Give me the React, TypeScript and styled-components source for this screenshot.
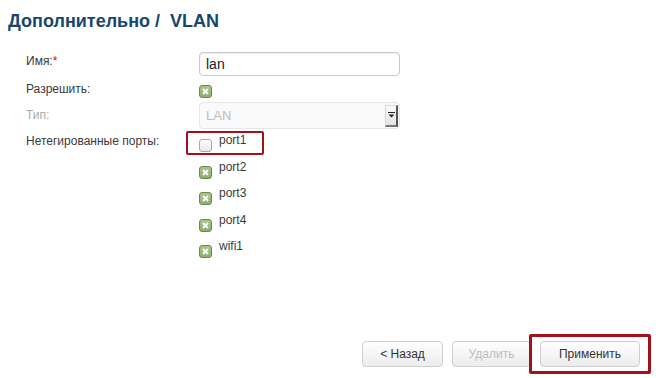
import React from 'react';
import styled, { createGlobalStyle } from 'styled-components';

const Global = createGlobalStyle`
  body {
    margin: 0;
    background: #fff;
    font-family: "Liberation Sans", Arial, sans-serif;
  }
`;

const Page = styled.div`
  min-height: 100vh;
  box-sizing: border-box;
  display: flex;
  flex-direction: column;
  padding-bottom: 11px;
`;

const Title = styled.h1`
  margin: 0;
  padding: 10px 8px 0;
  font-size: 18px;
  line-height: 22px;
  font-weight: bold;
  color: #17466f;
  white-space: pre;
`;

const Form = styled.div`
  margin-top: 20px;
  padding-left: 26px;
  display: flex;
  flex-direction: column;
`;

const Row = styled.div<{ $h: number; $gap: number }>`
  display: grid;
  grid-template-columns: 173px 201px;
  align-items: start;
  min-height: ${p => p.$h}px;
  margin-bottom: ${p => p.$gap}px;
`;

const Label = styled.div<{ $top: number; $muted?: boolean }>`
  padding-top: ${p => p.$top}px;
  font-size: 12px;
  line-height: 14px;
  color: ${p => (p.$muted ? '#ababab' : '#3a3a3a')};
`;

const Req = styled.span`
  color: #c8102e;
`;

const TextInput = styled.div`
  box-sizing: border-box;
  height: 24px;
  border: 1px solid #c9c9c9;
  border-radius: 4px;
  box-shadow: inset 0 1px 2px rgba(0, 0, 0, 0.08);
  padding: 0 6px;
  display: flex;
  align-items: center;
  font-size: 14px;
  color: #222;
`;

const Select = styled.div`
  box-sizing: border-box;
  height: 27px;
  border: 1px solid #e6e6e6;
  border-radius: 4px;
  background: #fafafa;
  padding: 0 1px 0 6px;
  display: flex;
  align-items: center;
  justify-content: space-between;
  font-size: 13px;
  color: #bdbdbd;
`;

const Drop = styled.div`
  box-sizing: border-box;
  width: 13px;
  height: 22px;
  background: linear-gradient(#fafafa, #e4e4e4);
  border: 1px solid #d8d8d8;
  border-right: 2px solid #555;
  border-bottom: 2px solid #777;
  display: flex;
  align-items: center;
  justify-content: center;
`;

const CheckCell = styled.div`
  padding-top: 3px;
`;

const Box = styled.span<{ $on: boolean }>`
  flex: none;
  box-sizing: border-box;
  width: 13px;
  height: 13px;
  border-radius: 3px;
  display: flex;
  align-items: center;
  justify-content: center;
  border: 1px solid ${p => (p.$on ? '#6a8a4c' : '#a9a9a9')};
  background: ${p =>
    p.$on ? 'linear-gradient(#a9c58b, #8eae70)' : 'linear-gradient(#fdfdfd, #e9e9e9)'};
`;

const Ports = styled.div`
  display: flex;
  flex-direction: column;
`;

const Port = styled.div`
  position: relative;
  height: 26.5px;
  display: flex;
  align-items: flex-start;
  gap: 7px;
  font-size: 12px;
  line-height: 14px;
  color: #3a3a3a;
  & > ${Box} {
    margin-top: 6px;
  }
`;

// red highlight frames drawn over the screenshot
const Mark = styled.div<{ $w: number; $x: number; $y: number }>`
  position: absolute;
  left: -${p => p.$x}px;
  right: -${p => p.$x}px;
  top: -${p => p.$y}px;
  bottom: -${p => p.$y}px;
  border: ${p => p.$w}px solid #a3111d;
  border-radius: 2px;
  pointer-events: none;
`;

const PortMark = styled(Mark)`
  right: auto;
  bottom: auto;
  width: 78px;
  height: 24px;
  box-sizing: border-box;
`;

const Footer = styled.div`
  margin-top: auto;
  display: flex;
  justify-content: flex-end;
  gap: 9px;
  padding-right: 16px;
`;

const Btn = styled.div<{ $w: number; $off?: boolean }>`
  position: relative;
  box-sizing: border-box;
  width: ${p => p.$w}px;
  height: 26px;
  border: 1px solid #cfcfcf;
  border-radius: 4px;
  background: linear-gradient(#ffffff, #ececec);
  display: flex;
  align-items: center;
  justify-content: center;
  font-size: 12px;
  color: ${p => (p.$off ? '#bdbdbd' : '#333')};
`;

const Check = ({ on }: { on: boolean }) => (
  <Box $on={on}>
    {on && (
      <svg width="7" height="7" viewBox="0 0 7 7">
        <path d="M1 1L6 6M6 1L1 6" stroke="#fff" strokeWidth="2" />
      </svg>
    )}
  </Box>
);

const ports = [
  { name: 'port1', on: false },
  { name: 'port2', on: true },
  { name: 'port3', on: true },
  { name: 'port4', on: true },
  { name: 'wifi1', on: true },
];

const App: React.FC = () => (
  <Page>
    <Global />
    <Title>Дополнительно /  VLAN</Title>
    <Form>
      <Row $h={24} $gap={6}>
        <Label $top={2}>Имя:<Req>*</Req></Label>
        <TextInput>lan</TextInput>
      </Row>
      <Row $h={16} $gap={4}>
        <Label $top={0}>Разрешить:</Label>
        <CheckCell>
          <Check on />
        </CheckCell>
      </Row>
      <Row $h={27} $gap={4}>
        <Label $top={6} $muted>Тип:</Label>
        <Select>
          LAN
          <Drop>
            <svg width="7" height="6" viewBox="0 0 7 6">
              <path d="M0 0.5H7" stroke="#222" strokeWidth="1" />
              <path d="M0.5 2.5H6.5L3.5 5.5Z" fill="#222" />
            </svg>
          </Drop>
        </Select>
      </Row>
      <Row $h={133} $gap={0}>
        <Label $top={1}>Нетегированные порты:</Label>
        <Ports>
          {ports.map((p, i) => (
            <Port key={p.name}>
              <Check on={p.on} />
              {p.name}
              {i === 0 && <PortMark $w={2} $x={13} $y={2} />}
            </Port>
          ))}
        </Ports>
      </Row>
    </Form>
    <Footer>
      <Btn $w={81}>&lt; Назад</Btn>
      <Btn $w={79} $off>Удалить</Btn>
      <Btn $w={100}>
        Применить
        <Mark $w={3} $x={12} $y={8} />
      </Btn>
    </Footer>
  </Page>
);

export default App;
